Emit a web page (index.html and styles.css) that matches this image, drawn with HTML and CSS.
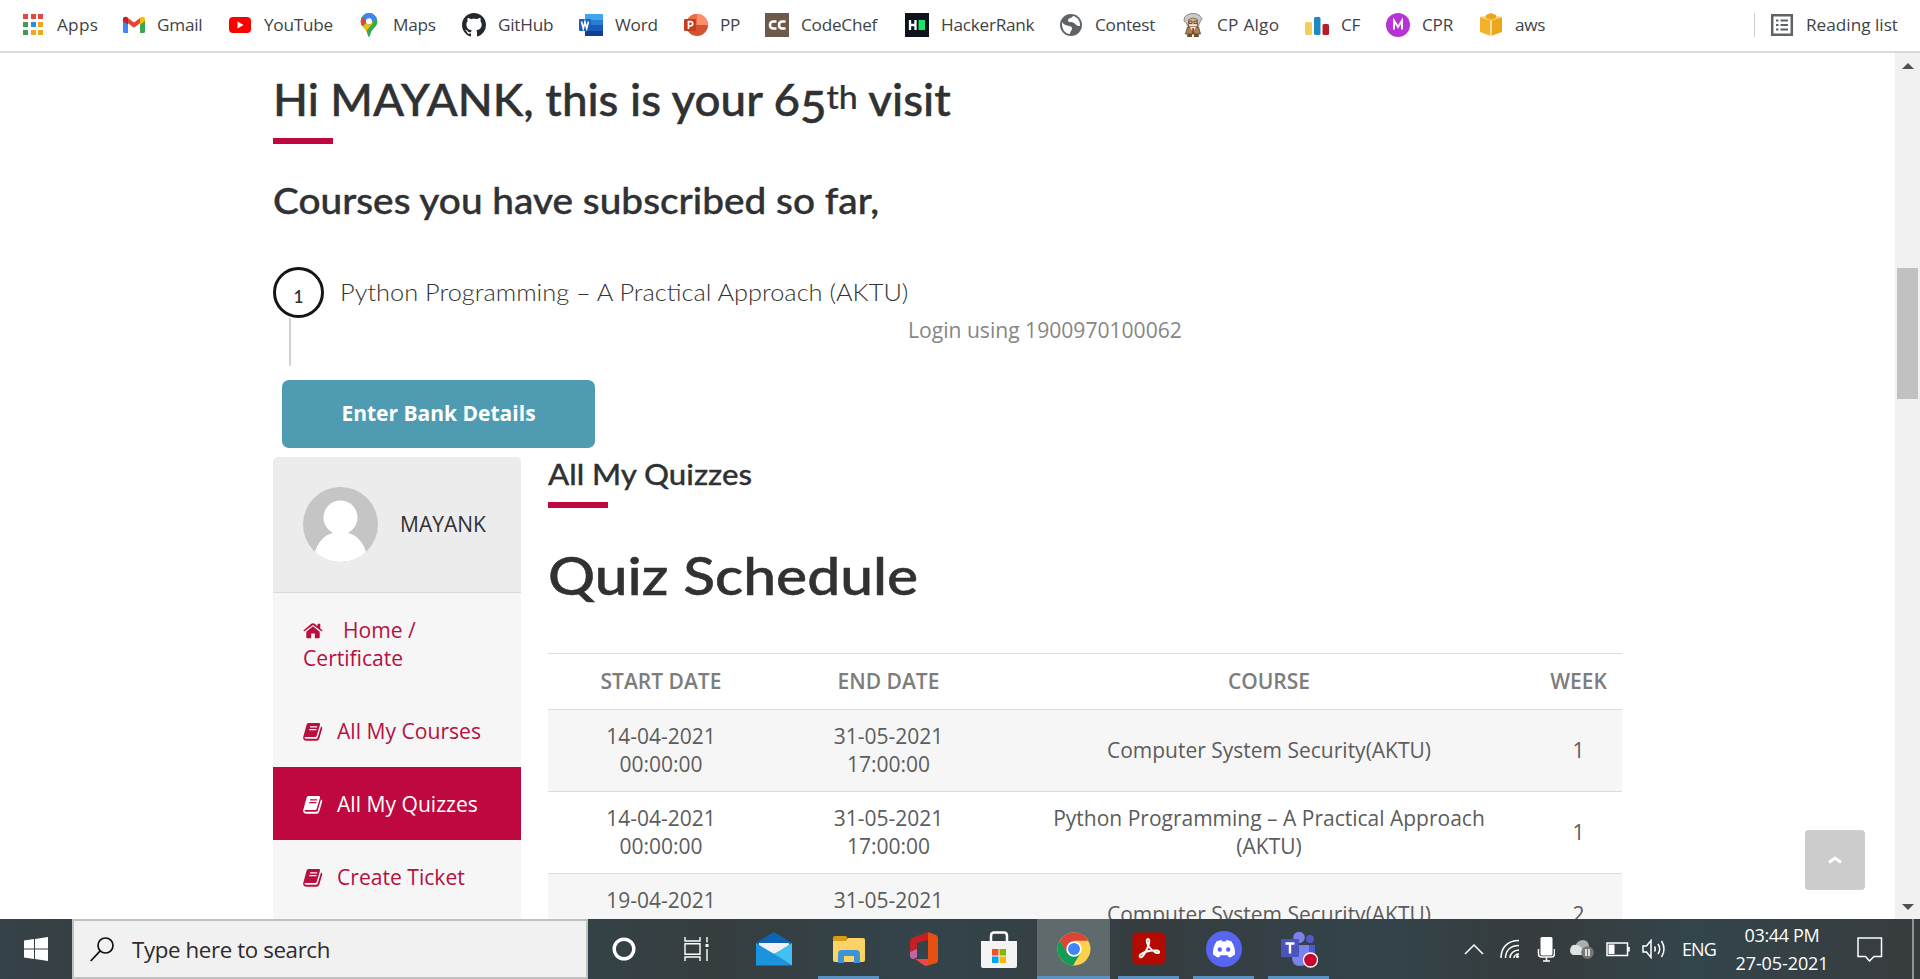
FILE: index.html
```html
<!DOCTYPE html>
<html lang="en">
<head>
<meta charset="utf-8">
<title>All My Quizzes</title>
<link rel="stylesheet" href="styles.css">
</head>
<body>
<div class="screen">
  <nav class="bookmarks">
    <a class="bm"><svg viewBox="0 0 24 24"><g fill="#e2483f"><path d="M2 1h5v5H2zM10 1h5v5h-5zM17 1h5v5h-5z"/></g><g fill="#3d9d55"><path d="M2 9h5v5H2zM2 17h5v5H2z"/></g><path fill="#2d8ae8" d="M10 9h5v5h-5z"/><path fill="#f2a81d" d="M17 9h5v5h-5zM10 17h5v5h-5zM17 17h5v5h-5z"/></svg><span class="wide">Apps</span></a>
    <a class="bm"><svg viewBox="0 0 24 24"><path fill="#4285f4" d="M2 6l5 4v10H3.500q-1.500 0-1.500-1.500z"/><path fill="#34a853" d="M24 6l-5 4v10h3.500q1.500 0 1.500-1.500z"/><path fill="#ea4335" d="M2 8V6c0-2 2.500-3 4-1.800L13 9.500l7-5.300-1 6-6 4.600-6-4.600z"/><path fill="#fbbc04" d="M19 5l1-.8c1.600-1.200 4-.2 4 1.800v2l-5 3.700z"/><path fill="#c5221f" d="M2 8V6c0-2 2.500-3 4-1.800L7 5v6.700z"/></svg><span>Gmail</span></a>
    <a class="bm"><svg viewBox="0 0 24 24"><rect x="1" y="4" width="22" height="16" rx="4" fill="#f00"/><path fill="#fff" d="M9.500 8.500v7l6-3.500z"/></svg><span>YouTube</span></a>
    <a class="bm"><svg viewBox="0 0 24 24"><clipPath id="pin"><path d="M12 0a8.300 8.300 0 0 0-8.300 8.300c0 4.700 3.500 6.200 5.800 9.700 1.300 2 1.500 6 2.500 6s1.200-4 2.500-6c2.300-3.500 5.800-5 5.800-9.700A8.300 8.300 0 0 0 12 0z"/></clipPath><g clip-path="url(#pin)"><path fill="#34a853" d="M0 0h24v24H0z"/><path fill="#fbbc04" d="M0 18L18 3l-4 12-8 7z"/><path fill="#34a853" d="M7 21L20 5l4 18H8z"/><path fill="#4285f4" d="M5 2l8-4 9 5-10 9z"/><path fill="#1a73e8" d="M4 2l6 6-6 6z" opacity=".5"/><path fill="#ea4335" d="M3 3l6 5-6 7z"/></g><circle cx="12" cy="8.300" r="3" fill="#fff"/></svg><span>Maps</span></a>
    <a class="bm"><svg viewBox="0 0 16 16"><path fill="#24292e" d="M8 0C3.580 0 0 3.580 0 8c0 3.540 2.290 6.530 5.470 7.590.4.070.55-.17.55-.38 0-.19-.01-.82-.01-1.490-2.010.37-2.530-.49-2.690-.94-.09-.23-.48-.94-.82-1.130-.28-.15-.68-.52-.01-.53.63-.01 1.080.58 1.230.82.72 1.210 1.870.87 2.330.66.07-.52.28-.87.51-1.070-1.780-.2-3.640-.89-3.640-3.950 0-.87.31-1.590.82-2.150-.08-.2-.36-1.020.08-2.120 0 0 .67-.21 2.200.82.64-.18 1.320-.27 2-.27s1.360.09 2 .27c1.530-1.040 2.200-.82 2.200-.82.44 1.100.16 1.920.08 2.120.51.56.82 1.270.82 2.150 0 3.070-1.870 3.750-3.650 3.950.29.25.54.73.54 1.480 0 1.070-.01 1.930-.01 2.200 0 .21.150.46.55.38A8 8 0 0 0 16 8c0-4.420-3.580-8-8-8z"/></svg><span>GitHub</span></a>
    <a class="bm"><svg viewBox="0 0 24 24"><path fill="#41a5ee" d="M6 1h18v6H6z"/><path fill="#2b7cd3" d="M6 7h18v5H6z"/><path fill="#185abd" d="M6 12h18v6H6z"/><path fill="#103f91" d="M6 18h18v5H6z"/><rect y="6" width="12" height="12" rx="1" fill="#1b5ebe"/><path fill="none" stroke="#fff" stroke-width="1.600" d="M2.500 8.500l1.800 7L6 9l1.700 6.500 1.800-7"/></svg><span>Word</span></a>
    <a class="bm"><svg viewBox="0 0 24 24"><circle cx="13" cy="12" r="11" fill="#d35230"/><path fill="#ed6c47" d="M13 1v11H2A11 11 0 0 1 13 1z"/><path fill="#ff8f6b" d="M13 1a11 11 0 0 1 11 11H13z"/><rect y="6" width="12" height="12" rx="1" fill="#c43e1c"/><path fill="none" stroke="#fff" stroke-width="1.700" d="M4.500 16V8.600h2a2.100 2.100 0 0 1 0 4.400h-2"/></svg><span>PP</span></a>
    <a class="bm"><svg viewBox="0 0 24 24"><path fill="#6d5849" d="M0 0h24v24H0z"/><path fill="none" stroke="#fff" stroke-width="2.600" d="M11.500 8.500H8.500q-3.500 0-3.500 3.500t3.500 3.500h3M20.500 8.500h-3q-3.500 0-3.500 3.500t3.500 3.500h3"/></svg><span>CodeChef</span></a>
    <a class="bm"><svg viewBox="0 0 24 24"><path fill="#0e141e" d="M0 0h24v24H0z"/><path fill="none" stroke="#fff" stroke-width="2.300" d="M5 7v10M10.500 7v10M5 12h5"/><path fill="#1be466" d="M13.500 7H20v10h-6.500z"/></svg><span>HackerRank</span></a>
    <a class="bm"><svg viewBox="0 0 24 24"><circle cx="12" cy="12" r="11" fill="#5f6368"/><path fill="#fff" d="M3 9c1 2 3 3 5 3.500 3 .8 5 .8 5 3s-2 2.500-2 5.500C6 21 2.500 16 3 9zM14 3c-1 2-5 2-5 4.500s4 1 6 2.500 2 3 6 3c.500-4-2-9-7-10z"/></svg><span>Contest</span></a>
    <a class="bm"><svg viewBox="0 0 24 24"><path fill="#c9c9c5" stroke="#77756f" stroke-width=".8" d="M5.500 10L3 8l.5-4 2.500-2 4-1.500h4l4 1.500 3 3.500L18.500 10l-1 3h-11z"/><path fill="#e2b483" stroke="#6a5140" stroke-width=".7" d="M7.500 6.500q4.500-3 9 0V14h-9z"/><path fill="none" stroke="#444" stroke-width=".8" d="M8 8h3v2.500H8zM13 8h3v2.500h-3z"/><path stroke="#eee" stroke-width="2" d="M8.500 12.500h7"/><path fill="#a98349" stroke="#51402b" stroke-width=".8" d="M6.500 14h11l2 7h-15z"/><path fill="#eee" d="M9 14h6l-3 5z"/><path fill="#a22" d="M11.300 15h1.600v6h-1.600z"/><path fill="#6b5030" d="M6.500 21h4.500v3H6zM13 21h4.500l.5 3h-5z"/></svg><span class="wide">CP Algo</span></a>
    <a class="bm"><svg viewBox="0 0 24 24"><rect y="9" width="7" height="13" rx="1.500" fill="#f4cd5c"/><rect x="9" y="4" width="6.500" height="18" rx="1.500" fill="#1e88c7"/><rect x="17.500" y="11" width="6.500" height="11" rx="1.500" fill="#b81d24"/></svg><span>CF</span></a>
    <a class="bm"><svg viewBox="0 0 24 24"><circle cx="12" cy="12" r="12" fill="#b832d6"/><path fill="none" stroke="#fff" stroke-width="1.900" d="M8 16.500v-9l4 6.500 4-6.500v9"/></svg><span>CPR</span></a>
    <a class="bm"><svg viewBox="0 0 24 24"><path fill="#f2b02c" d="M1 4l11 3v16L1 19z"/><path fill="#eda51b" d="M23 4L12 7v16l11-4z"/><path fill="#f9d27c" d="M1 4l11-2 11 2-11 4z"/><path fill="#eca421" d="M7 2l5-2 5 2v3l-5 2-5-2z"/><path stroke="#fff0c5" stroke-width="1.500" d="M12 8v15"/></svg><span>aws</span></a>
    <a class="bm reading"><svg viewBox="0 0 24 24"><path fill="none" stroke="#5f6368" stroke-width="2.500" d="M2.200 2.200h19.600v19.600H2.200z"/><path stroke="#5f6368" stroke-width="2" d="M6 7.500h2.500M10.500 7.500H18M6 12h2.500M10.500 12H18M6 16.500h2.500M10.500 16.500H18"/></svg><span>Reading list</span></a>
  </nav>

  <div class="viewport">
    <main class="page">
      <h1 class="greeting">Hi MAYANK, this is your 6<span class="oldstyle">5</span><sup>th</sup> visit</h1>
      <div class="rule"></div>
      <h2 class="subscribed">Courses you have subscribed so far,</h2>
      <div class="step">
        <div class="step-num">1</div>
        <div class="step-name">Python Programming – A Practical Approach (AKTU)</div>
        <div class="step-login">Login using 1900970100062</div>
      </div>
      <div class="step-line"></div>
      <a class="bank">Enter Bank Details</a>
      <div class="columns">
        <aside class="side">
          <div class="user">
            <svg class="avatar" viewBox="0 0 75 75"><clipPath id="av"><circle cx="37.500" cy="37.500" r="37.500"/></clipPath><g clip-path="url(#av)"><path fill="#c5c5c5" d="M0 0h75v75H0z"/><circle cx="37.500" cy="30.500" r="17" fill="#fff"/><path fill="#fff" d="M30 43h15v3c9 2 16 10 18.500 21L64 75H11l.5-8C14 56 21 48 30 46z"/></g></svg>
            <span>MAYANK</span>
          </div>
          <a class="item home"><svg class="ico" viewBox="0 0 20 20"><path d="M10 5.200L3.300 10.700V16.500q0 .8.800.8H8.200V12.500h3.600v4.800h4.100q.8 0 .8-.8v-5.800z"/><path d="M19.600 9.500L17.300 7.600V3.200q0-.4-.4-.4h-2q-.4 0-.4.400v2.100L12 3.100q-2-1.500-4 0L.400 9.500l.8 1L10 3.900l8.800 6.600z"/></svg><span class="home-text">Home /</span> Certificate</a>
          <a class="item"><svg class="ico" viewBox="0 0 20 20"><path d="M5.500 1H16q1.500 0 1 1.700l-3.300 11q-.4 1.300-1.700 1.300H2.500q-1.300 0-1 .8.300.9 1.500.9h10.300q1 0 1.400-1.200L18 4.500q1.600.6 1.200 2l-3 10.300q-.6 2-2.500 2H3.500Q.3 18.800.1 15.500L3.500 3Q4 1 5.500 1z"/><path class="lines" d="M7 4.800h7.200M6.200 7.600h7.200"/></svg>All My Courses</a>
          <a class="item active"><svg class="ico" viewBox="0 0 20 20"><path d="M5.500 1H16q1.500 0 1 1.700l-3.300 11q-.4 1.300-1.700 1.300H2.500q-1.300 0-1 .8.300.9 1.500.9h10.300q1 0 1.400-1.200L18 4.500q1.600.6 1.200 2l-3 10.300q-.6 2-2.500 2H3.500Q.3 18.800.1 15.500L3.500 3Q4 1 5.500 1z"/><path class="lines" d="M7 4.800h7.200M6.200 7.600h7.200"/></svg>All My Quizzes</a>
          <a class="item"><svg class="ico" viewBox="0 0 20 20"><path d="M5.500 1H16q1.500 0 1 1.700l-3.300 11q-.4 1.300-1.700 1.300H2.500q-1.300 0-1 .8.300.9 1.500.9h10.300q1 0 1.400-1.200L18 4.500q1.600.6 1.200 2l-3 10.300q-.6 2-2.500 2H3.500Q.3 18.800.1 15.500L3.500 3Q4 1 5.500 1z"/><path class="lines" d="M7 4.800h7.200M6.200 7.600h7.200"/></svg>Create Ticket</a>
        </aside>
        <section class="quizzes">
          <h3 class="section-title">All My Quizzes</h3>
          <div class="rule"></div>
          <h2 class="schedule-title">Quiz Schedule</h2>
          <table class="schedule">
            <colgroup><col class="c1"><col class="c2"><col class="c3"><col class="c4"></colgroup>
            <tr><th>START DATE</th><th>END DATE</th><th>COURSE</th><th>WEEK</th></tr>
            <tr class="odd"><td>14-04-2021<br>00:00:00</td><td>31-05-2021<br>17:00:00</td><td>Computer System Security(AKTU)</td><td>1</td></tr>
            <tr><td>14-04-2021<br>00:00:00</td><td>31-05-2021<br>17:00:00</td><td>Python Programming – A Practical Approach<br>(AKTU)</td><td>1</td></tr>
            <tr class="odd"><td>19-04-2021<br>&nbsp;</td><td>31-05-2021<br>&nbsp;</td><td>Computer System Security(AKTU)</td><td>2</td></tr>
          </table>
        </section>
      </div>
    </main>
    <a class="to-top"><svg viewBox="0 0 16 10"><path d="M2 7.500l6-4.500 6 4.500"/></svg></a>
    <div class="scrollbar">
      <svg viewBox="0 0 12 6"><path d="M0 6l6-6 6 6z"/></svg>
      <div class="thumb"></div>
      <svg viewBox="0 0 12 6"><path d="M0 0l6 6 6-6z"/></svg>
    </div>
  </div>

  <footer class="taskbar">
    <div class="start"><svg width="24" height="24" viewBox="0 0 24 24"><path fill="#fff" d="M0 3.400l10-1.400v9.500H0zM11 1.900L24 0v11.500H11zM0 12.500h10V22L0 20.600zM11 12.500h13V24l-13-1.900z"/></svg></div>
    <div class="search"><svg width="24" height="25" viewBox="0 0 24 25"><g fill="none" stroke="#111" stroke-width="1.700"><circle cx="15.500" cy="8.500" r="7.500"/><path d="M10.200 13.800L.7 24"/></g></svg><span>Type here to search</span></div>
    <div class="cell cortana"><svg width="24" height="24" viewBox="0 0 24 24"><circle cx="12" cy="12" r="9.800" fill="none" stroke="#fff" stroke-width="3.400"/></svg></div>
    <div class="cell taskview"><svg width="26" height="24" viewBox="0 0 26 24"><path fill="none" stroke="#fff" stroke-width="1.400" d="M1 0v4h15V0M1 6.800h15v10.500H1zM1 24v-4h15v4M23 0v5.500M23 12v12"/><path fill="#fff" d="M21.500 7h3v3h-3z"/></svg></div>
    <div class="cell"><svg width="36" height="34" viewBox="0 0 36 34"><path fill="#0f63b5" d="M0 11L18 0l18 11v5H0z"/><path fill="#f2f2f2" d="M3 11h30v4L18 22 3 15z"/><path fill="#1b93df" d="M0 11l18 11L36 33.500H0z"/><path fill="#43c0f3" d="M36 11L18 22l18 11.500z"/></svg></div>
    <div class="cell open"><svg width="34" height="28" viewBox="0 0 34 28"><path fill="#d99c12" d="M1 3q0-2 2-2h10q2 0 2.500 2L12 7H1z"/><path fill="#fdd367" d="M1 6h12l3-3h15q2 0 2 2v20q0 2-2 2H3q-2 0-2-2z"/><path fill="#3e93d6" d="M6 28v-9q0-4 4-4h14q4 0 4 4v9h-6v-7H12v7z"/></svg></div>
    <div class="cell"><svg width="28" height="34" viewBox="0 0 28 34"><path fill="#c41f23" d="M18 0L3 5.500Q0 7 0 10v14q0 3 4 3l3-2V11l11-3z"/><path fill="#e65013" d="M18 0l8 3q2 1 2 3v22q0 3-3 3.500L16 34l2-5z"/><path fill="#ef4747" d="M5 27h13v6l-3 1z"/><path fill="#c064a3" d="M0 20l7-3v8l-3 2q-4 0-4-3z"/></svg></div>
    <div class="cell"><svg width="36" height="37" viewBox="0 0 36 37"><path fill="none" stroke="#fff" stroke-width="2.500" d="M10 11V5q0-3.500 3-3.500h10q3 0 3 3.500v6"/><path fill="#f4f4f4" d="M0 10h36v25q0 2-2 2H2q-2 0-2-2z"/><path fill="#f25022" d="M11 18h6.500v6.500H11z"/><path fill="#7fba00" d="M18.500 18H25v6.500h-6.500z"/><path fill="#00a4ef" d="M11 25.500h6.500V32H11z"/><path fill="#ffb900" d="M18.500 25.500H25V32h-6.500z"/></svg></div>
    <div class="cell current"><svg width="34" height="34" viewBox="0 0 34 34"><circle cx="17" cy="17" r="16.500" fill="#fdd249"/><path fill="#db4437" d="M2.700 8.800A16.500 16.500 0 0 1 31.300 8.800H17l-7.500 12z"/><path fill="#0f9d58" d="M2.700 8.800A16.500 16.500 0 0 0 16 33.500l7.500-12.500H10z"/><circle cx="17" cy="17" r="7.700" fill="#fff"/><circle cx="17" cy="17" r="6" fill="#4285f4"/></svg></div>
    <div class="cell open"><svg width="34" height="34" viewBox="0 0 34 34"><rect x=".5" y=".5" width="33" height="32" rx="5" fill="#b30b00"/><path fill="none" stroke="#fff" stroke-width="1.900" d="M8 25c-2-2 4-5 9-6s11-1 10 1.500c-1 2-6-1-9-4.500s-4.500-9-2-9 1 6-1 10-5 10-7 8z"/></svg></div>
    <div class="cell open"><svg width="36" height="36" viewBox="0 0 36 36"><circle cx="18" cy="18" r="18" fill="#5865f2"/><path fill="#fff" d="M10.500 10.500q3-1.500 5-1.500l.8 1.500h3.400l.8-1.500q2 0 5 1.500 4 6 3.500 13-3 2.500-6 3l-1.500-2.300h-7L13 26.500q-3-.5-6-3-.5-7 3.500-13z"/><g fill="#5865f2"><circle cx="13.800" cy="18.500" r="2.200"/><circle cx="22.200" cy="18.500" r="2.200"/></g></svg></div>
    <div class="cell open"><svg width="38" height="37" viewBox="0 0 38 37"><circle cx="19" cy="6.500" r="5.800" fill="#7b83eb"/><circle cx="30" cy="8" r="4" fill="#5059c9"/><path fill="#5059c9" d="M25 14h10v12q-4 4-10 0z"/><path fill="#7b83eb" d="M12 14h17v12q0 9-9 9-8 0-8-9z"/><path fill="#4b53bc" d="M1 8h18v18H1z"/><path fill="none" stroke="#fff" stroke-width="2.400" d="M5.500 12.500h9M10 12.500v10"/><circle cx="30.500" cy="29" r="7" fill="#c4062e" stroke="#fff" stroke-width="1.300"/></svg></div>
    <div class="tray">
      <div><svg width="20" height="12" viewBox="0 0 20 12"><path d="M1 11l9-9 9 9"/></svg></div>
      <div><svg width="20" height="20" viewBox="0 0 20 20"><path d="M1 19C1 8 8 1.500 19 1.500M5.500 19C5.500 11 11 6.500 19 6.500M10 19c0-4.500 4-8 9-8M14 19c0-2 2-4 5-4"/><circle class="solid" cx="17.500" cy="17.500" r="1.600"/></svg></div>
      <div><svg width="18" height="25" viewBox="0 0 18 25"><rect class="solid" x="3.500" y="0" width="12" height="18.500" rx="1.500"/><path d="M1.500 12v5q0 3 3 3h10q3 0 3-3v-5M9.500 20v4M6 24h7"/></svg></div>
      <div><svg width="24" height="20" viewBox="0 0 24 20"><path fill="#a9afb0" stroke="none" d="M5 8q2-7 8-7 5 0 6 6v8H5z"/><path fill="#dfe2e2" stroke="none" d="M0 11q1-6 6-5 4 0 7 5v5H3q-3-1-3-5z"/><circle cx="17.500" cy="13.500" r="6.300" fill="#777" stroke="none"/><path d="M16 10v7M19 10v7"/></svg></div>
      <div><svg width="24" height="15" viewBox="0 0 24 15"><path d="M1 1h20.500v12.500H1zM23 5v4.500"/><path class="solid" d="M2.500 2.500h6v9.500h-6z"/></svg></div>
      <div><svg width="24" height="20" viewBox="0 0 24 20"><path d="M1 7h3.500L9 1.500v17L4.500 13H1zM12.500 7.500q1.500 2.500 0 5M16 5q3.500 5 0 10M19.500 2q5 8 0 16"/></svg></div>
      <div class="lang">ENG</div>
      <div class="clock"><span>03:44 PM</span><span class="date">27-05-2021</span></div>
      <div class="notif"><svg width="26" height="25" viewBox="0 0 26 25"><path d="M1 1h23.500v18.500h-7.500L12.500 24 8.500 19.500H1z"/></svg></div>
      <div class="peek"></div>
    </div>
  </footer>
</div>
</body>
</html>
```
FILE: styles.css
```css
* { box-sizing: border-box; }
body { margin: 0; background: #fff; font-family: "Open Sans", "Noto Sans", sans-serif; }
h1, h2, h3 { margin: 0; font-family: Lato, sans-serif; font-weight: 500; color: #303133; white-space: nowrap; transform-origin: 0 50%; }
.screen { width: 1920px; height: 979px; overflow: hidden; display: grid; grid-template-rows: 53px 866px 60px; }

.bookmarks { display: grid; grid-template-columns: 100px 107px 129px 105px 117px 105px 81px 140px 154px 122px 124px 81px 93px 1fr 166px; padding-left: 21px; border-bottom: 2px solid #d9dadc; height: 53px; }
.bm { display: flex; align-items: center; height: 50px; gap: 12px; font-size: 17.200px; letter-spacing: -.25px; color: #3f4347; white-space: nowrap; }
.bm span { padding-bottom: 2px; }
.bm .wide { letter-spacing: .25px; }
.bm svg { width: 24px; height: 24px; flex: none; }
.reading { align-self: center; height: 24px; border-left: 1px solid #cfd0d2; padding-left: 15px; margin-top: -1px; letter-spacing: 0; }

.viewport { position: relative; display: flex; justify-content: space-between; overflow: hidden; }
.page { width: 1622px; padding: 13px 0 0 273px; }
.greeting { font-size: 44.500px; line-height: 66px; transform: scaleX(1.028); -webkit-text-stroke: .45px #303133; }
.oldstyle { display: inline-block; vertical-align: -7px; line-height: 40px; }
.greeting sup { font-size: 33px; line-height: 0; vertical-align: 7px; -webkit-text-stroke-width: .2px; }
.rule { width: 60px; height: 6px; background: #c00840; }
.greeting + .rule { margin-top: 6px; }
.subscribed { font-size: 36.500px; line-height: 50px; margin-top: 31px; transform: scaleX(1.062); -webkit-text-stroke: .4px #303133; }
.step { display: flex; align-items: flex-start; margin-top: 42px; height: 51px; }
.step-num { width: 51px; height: 51px; border: 3px solid #151515; border-radius: 50%; text-align: center; font: 600 17px/54px Lato, sans-serif; color: #303133; }
.step-name { width: 568px; margin: 10px 0 0 16px; font: 300 24px/30px Lato, sans-serif; color: #333; white-space: nowrap; transform: scaleX(1.057); transform-origin: 0 50%; }
.step-login { font-size: 21.100px; line-height: 30px; margin-top: 48px; color: #868686; white-space: nowrap; }
.step-line { width: 1.500px; height: 48px; margin-left: 16px; background: #d2d2d2; }
.bank { display: flex; align-items: center; justify-content: center; width: 313px; height: 68px; margin: 14px 0 9px 9px; padding-bottom: 2px; border-radius: 7px; background: #4f9bb1; color: #fff; font-size: 21px; font-weight: 700; }
.columns { display: grid; grid-template-columns: 248px 1074px; column-gap: 27px; }

.side { background: #f6f6f6; border-radius: 5px 5px 0 0; overflow: hidden; height: 500px; }
.user { display: flex; align-items: center; gap: 22px; height: 136px; padding-left: 30px; background: #ececec; border-bottom: 1px solid #dadada; color: #303133; font-size: 21px; }
.user span { padding-bottom: 2px; }
.avatar { width: 75px; height: 75px; }
.item { display: block; padding: 22.500px 30px; font-size: 21.100px; line-height: 28px; color: #b5103f; white-space: nowrap; }
.item.home { padding-right: 60px; white-space: normal; }
.ico { width: 20px; height: 20px; margin-right: 14px; vertical-align: -3px; fill: currentColor; }
.home-text { margin-left: 6px; }
.lines { stroke: #f6f6f6; stroke-width: 1.200; fill: none; }
.active { background: #c00840; color: #fff; }
.active .lines { stroke: #c00840; }

.section-title { font-size: 29px; line-height: 40px; margin-top: -3px; transform: scaleX(1.076); -webkit-text-stroke: .3px #303133; }
.section-title + .rule { margin-top: 8px; }
.schedule-title { font-size: 53px; line-height: 70px; margin: 32px 0 43px; transform: scaleX(1.108); -webkit-text-stroke: .55px #303133; }
.schedule { width: 1074px; table-layout: fixed; border-collapse: collapse; font-size: 21px; line-height: 28px; text-align: center; color: #5c5c5c; }
.c1 { width: 226px; } .c2 { width: 229px; } .c3 { width: 532px; } .c4 { width: 87px; }
.schedule th { height: 56px; padding: 0 0 2px; border-top: 1px solid #dcdcdc; font-weight: 600; color: #7d7d7d; }
.schedule td { height: 82px; padding: 0 0 2px; border-top: 1px solid #dcdcdc; white-space: nowrap; }
.odd { background: #f6f6f6; }

.to-top { position: absolute; left: 1805px; top: 777px; width: 60px; height: 60px; border-radius: 4px; background: #ccc; display: grid; place-items: center; }
.to-top svg { width: 16px; height: 10px; fill: none; stroke: #fff; stroke-width: 3; }
.scrollbar { width: 25px; background: #f1f1f1; display: flex; flex-direction: column; align-items: center; padding: 10px 0 9px; }
.scrollbar svg { width: 12px; height: 6px; fill: #505050; }
.thumb { width: 21px; height: 131px; margin: 199px 0 auto; background: #c1c1c1; }

.taskbar { display: flex; background: linear-gradient(90deg, #354247, #36393b 16%, #33444a 28%, #363d3f 37%, #33444a 48%, #363d40 60%, #33444a 72%, #363b3d 80%, #33454b 88%, #383c3e); }
.start { width: 72px; display: grid; place-items: center; }
.search { width: 516px; border: 2px solid #c0c0c0; background: #f1f1f1; display: flex; align-items: center; gap: 18px; padding-left: 16px; font-size: 22.300px; letter-spacing: -.38px; color: #2b2b2b; white-space: nowrap; }
.cell { width: 75px; display: grid; place-items: center; }
.cortana { width: 72px; }
.taskview { width: 76px; padding-right: 3px; }
.open { background: linear-gradient(#5a92c4, #5a92c4) 50% 100% / 61px 3px no-repeat; }
.current { background: linear-gradient(#5a92c4, #5a92c4) 50% 100% / 73px 3px no-repeat, linear-gradient(#5f6a6d, #5f6a6d) 50% 0 / 73px 60px no-repeat; }
.tray { margin-left: auto; width: 464px; display: grid; grid-template-columns: repeat(6, 36px) 54px 112px 64px 10px 8px; color: #fff; font-size: 18px; }
.tray > div { display: grid; place-items: center; }
.tray svg { fill: none; stroke: #fff; stroke-width: 1.500; }
.tray svg .solid { fill: #fff; stroke: none; }
.tray .lang { letter-spacing: -.8px; }
.tray .clock { align-content: center; row-gap: 4px; line-height: 24px; white-space: nowrap; letter-spacing: -.35px; }
.tray .clock .date { letter-spacing: -.1px; }
.tray .peek { grid-column: 11; border-left: 2px solid #8d9496; }
```
